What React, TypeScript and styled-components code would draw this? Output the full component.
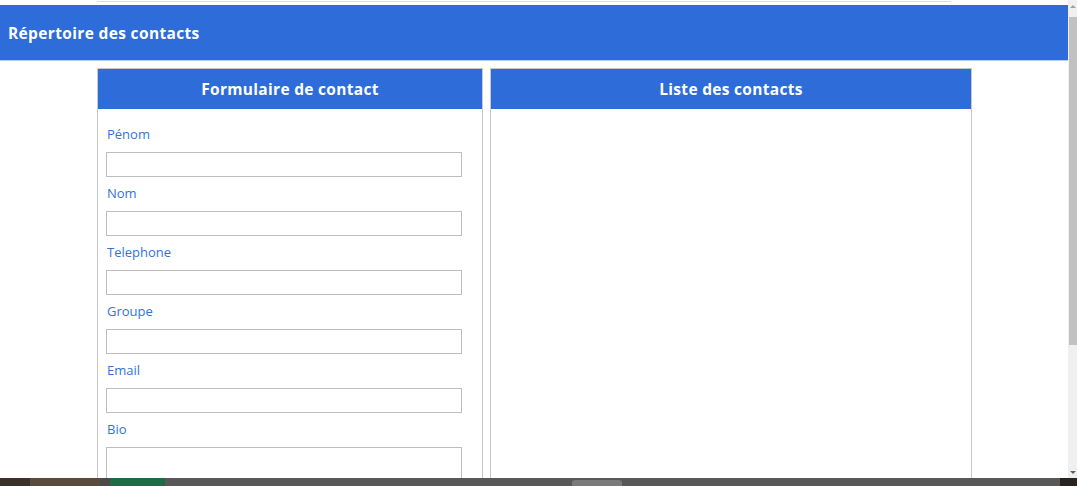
import React from "react";
import styled, { createGlobalStyle } from "styled-components";

const GlobalStyle = createGlobalStyle`
  html, body {
    margin: 0;
    padding: 0;
    overflow: hidden;
    background: white;
  }
  * {
    box-sizing: border-box;
  }
`;

const Screen = styled.div`
  display: flex;
  flex-direction: column;
  width: 1077px;
  height: 486px;
  font-family: "Open Sans", "Noto Sans", sans-serif;
`;

const Viewport = styled.div`
  flex: 1;
  display: flex;
  min-height: 0;
`;

const Page = styled.div`
  flex: 1;
  display: flex;
  flex-direction: column;
  overflow: hidden;
  & > * {
    flex-shrink: 0;
  }
`;

const TopStrip = styled.div`
  height: 5px;
  padding: 0 117px 0 97px;
`;

const TopLine = styled.div`
  height: 2px;
  border-bottom: 1px solid #dcdcdc;
`;

const Header = styled.header`
  height: 56px;
  background: #2d6cd9;
  color: white;
  display: flex;
  align-items: center;
  padding-left: 8px;
  font-size: 15.5px;
  font-weight: 700;
  letter-spacing: 0.35px;
  border-bottom: 1px solid #b9cdf2;
`;

const Columns = styled.main`
  display: grid;
  grid-template-columns: 386px 482px;
  gap: 7px;
  justify-content: center;
  padding: 7px 0 0 1px;
`;

const Card = styled.section`
  border: 1px solid #c8c8c8;
  height: 420px;
`;

const CardTitle = styled.h2`
  margin: 0;
  height: 40px;
  background: #2d6cd9;
  color: white;
  font-size: 15.5px;
  font-weight: 700;
  letter-spacing: 0.3px;
  display: flex;
  align-items: center;
  justify-content: center;
`;

const Form = styled.form`
  display: flex;
  flex-direction: column;
  padding: 16px 20px 0 8px;
`;

const Label = styled.label`
  color: #3274d6;
  font-size: 13px;
  line-height: 18px;
  margin-bottom: 9px;
  padding-left: 1px;
`;

const Input = styled.input`
  height: 25px;
  border: 1px solid #bdbdbd;
  margin: 0 0 7px 0;
  padding: 2px 4px;
  outline: none;
`;

const TextArea = styled.textarea`
  height: 50px;
  border: 1px solid #bdbdbd;
  resize: none;
  outline: none;
`;

const Scrollbar = styled.div`
  width: 9px;
  background: #f0f0f0;
  display: flex;
  flex-direction: column;
  align-items: center;
`;

const Arrow = styled.div<{ $down?: boolean }>`
  height: 12px;
  display: flex;
  align-items: center;
  justify-content: center;
  &::before {
    content: "";
    border-left: 3px solid transparent;
    border-right: 3px solid transparent;
    ${(p) => (p.$down ? "border-top: 3px solid #606060;" : "border-bottom: 3px solid #a0a0a0;")}
  }
`;

const Thumb = styled.div`
  width: 8px;
  height: 328px;
  margin-top: 5px;
  background: #c1c1c1;
`;

const Track = styled.div`
  flex: 1;
`;

const Taskbar = styled.div`
  height: 8px;
  background: #585858;
  display: flex;
`;

const TaskItem = styled.div<{ $w: number; $bg: string }>`
  width: ${(p) => p.$w}px;
  background: ${(p) => p.$bg};
  flex-shrink: 0;
`;

const Pill = styled.div`
  width: 50px;
  margin: 2px 0 0 0;
  border-radius: 3px 3px 0 0;
  background: #7a7a7a;
`;

const Spacer = styled.div<{ $w: number }>`
  width: ${(p) => p.$w}px;
  flex-shrink: 0;
`;

const fields = ["Pénom", "Nom", "Telephone", "Groupe", "Email"];

export default function App() {
  return (
    <Screen>
      <GlobalStyle />
      <Viewport>
        <Page>
          <TopStrip>
            <TopLine />
          </TopStrip>
          <Header>Répertoire des contacts</Header>
          <Columns>
            <Card>
              <CardTitle>Formulaire de contact</CardTitle>
              <Form>
                {fields.map((f) => (
                  <React.Fragment key={f}>
                    <Label>{f}</Label>
                    <Input type="text" />
                  </React.Fragment>
                ))}
                <Label>Bio</Label>
                <TextArea />
              </Form>
            </Card>
            <Card>
              <CardTitle>Liste des contacts</CardTitle>
            </Card>
          </Columns>
        </Page>
        <Scrollbar>
          <Arrow />
          <Thumb />
          <Track />
          <Arrow $down />
        </Scrollbar>
      </Viewport>
      <Taskbar>
        <TaskItem $w={30} $bg="#3a3128" />
        <TaskItem $w={70} $bg="#5a4a3a" />
        <TaskItem $w={10} $bg="#4a4a4a" />
        <TaskItem $w={55} $bg="#1f6b45" />
        <Spacer $w={407} />
        <Pill />
        <Spacer $w={438} />
        <TaskItem $w={17} $bg="#2a2420" />
      </Taskbar>
    </Screen>
  );
}
